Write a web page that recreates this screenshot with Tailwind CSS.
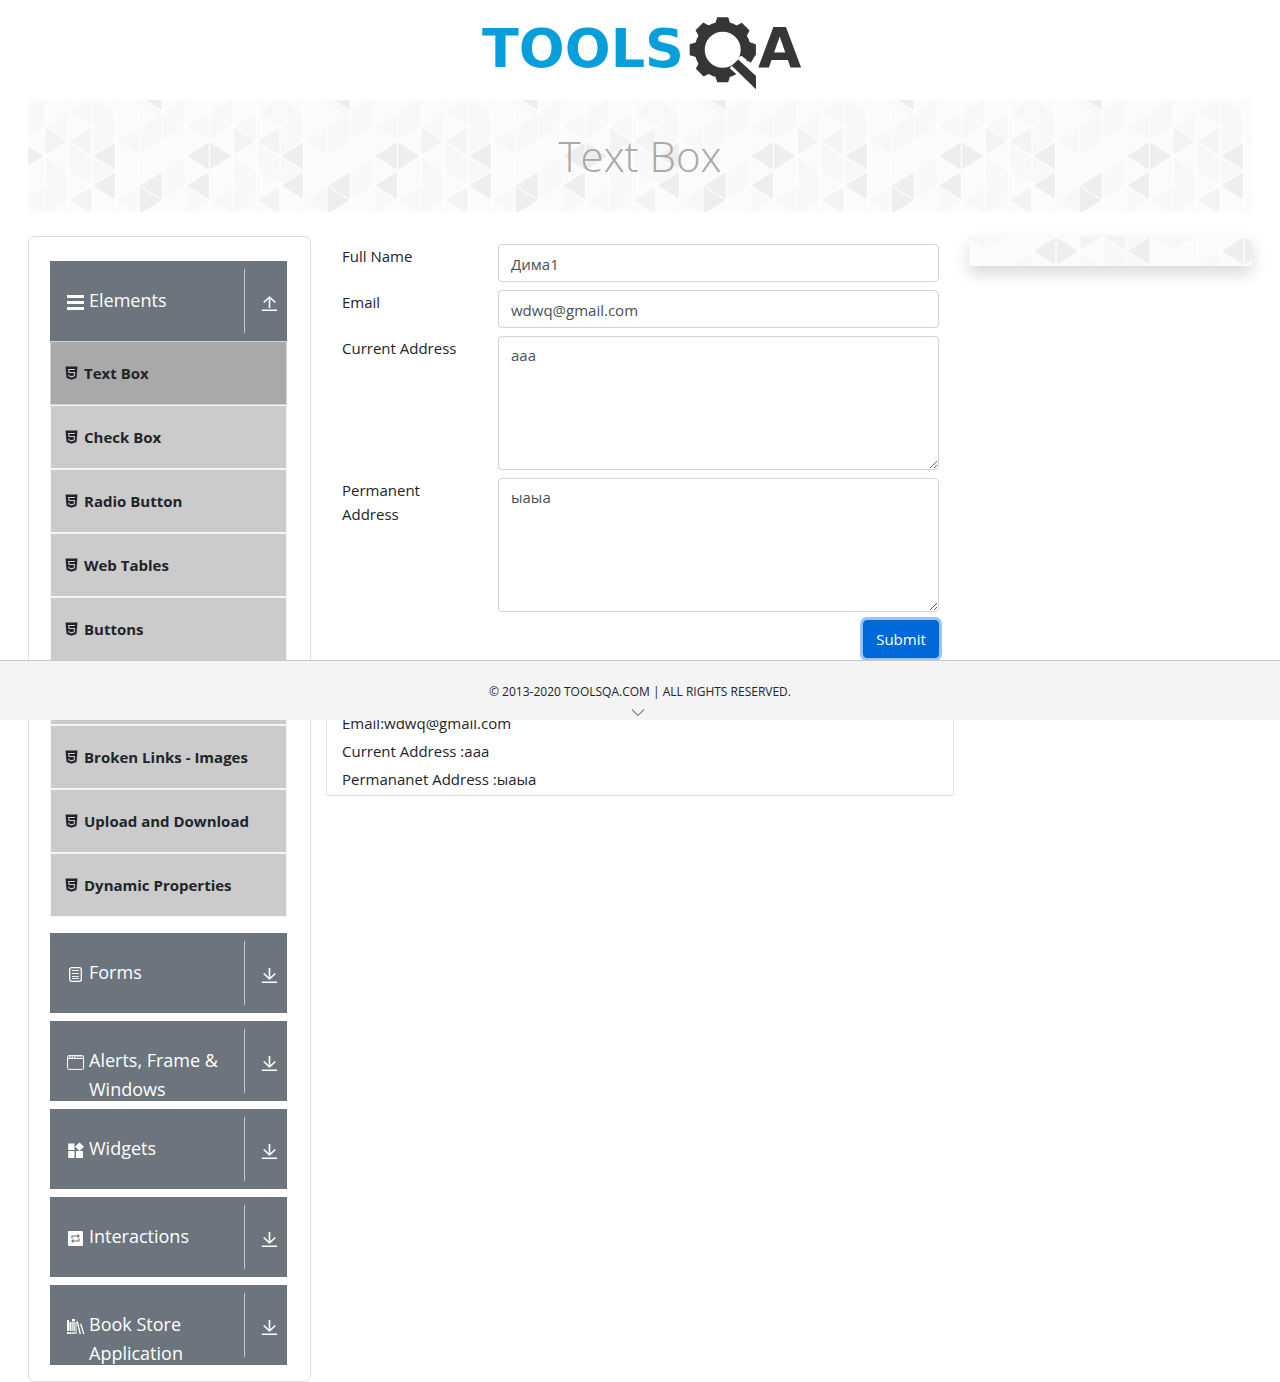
<!DOCTYPE html>
<html lang="en">
<head>
<meta charset="utf-8">
<title>ToolsQA - Text Box</title>
<script src="https://cdn.jsdelivr.net/npm/@tailwindcss/browser@4"></script>
</head>
<body class="relative bg-white font-['Open_Sans','Noto_Sans',sans-serif] text-[15px] leading-6 text-[#212529]">

<!-- shared symbols -->
<svg class="absolute size-0" aria-hidden="true">
  <defs>
    <path id="lt" d="M0 0L23.5 -14.8V14.8Z"/>
    <path id="rt" d="M0 0L-23.5 -14.8V14.8Z"/>
    <pattern id="tri" patternUnits="userSpaceOnUse" x="-31" y="-59.2" width="188" height="118.4">
      <rect width="188" height="118.4" fill="#fbfbfb"/>
      <g fill="#f8f8f8">
        <use href="#lt" x="0" y="29.6"/><use href="#lt" x="0" y="88.8"/><use href="#lt" x="23.5" y="14.8"/><use href="#lt" x="23.5" y="74"/>
        <use href="#rt" x="23.5" y="74"/><use href="#rt" x="23.5" y="103.6"/><use href="#lt" x="47" y="29.6"/><use href="#rt" x="70.5" y="14.8"/>
        <use href="#rt" x="70.5" y="44.4"/><use href="#lt" x="70.5" y="44.4"/><use href="#rt" x="70.5" y="74"/><use href="#lt" x="70.5" y="103.6"/>
        <use href="#lt" x="94" y="29.6"/><use href="#rt" x="117.5" y="44.4"/><use href="#lt" x="117.5" y="14.8"/><use href="#lt" x="117.5" y="74"/>
        <use href="#rt" x="141" y="29.6"/><use href="#rt" x="141" y="88.8"/><use href="#lt" x="141" y="29.6"/><use href="#rt" x="164.5" y="103.6"/>
        <use href="#lt" x="164.5" y="14.8"/><use href="#lt" x="164.5" y="103.6"/><use href="#rt" x="188" y="29.6"/><use href="#rt" x="47" y="59.2"/>
      </g>
      <g fill="#f3f3f3">
        <use href="#rt" x="23.5" y="44.4"/><use href="#lt" x="23.5" y="44.4"/><use href="#lt" x="23.5" y="103.6"/>
      </g>
      <path d="M94 0L117.500 14.800L94 0H117.500V14.800Z" fill="#f8f8f8"/>
      <path d="M94 3h5L117.500 14.800L112 18L94 6Z" fill="#f8f8f8"/>
      <g fill="#eeeeee">
        <use href="#lt" x="47" y="59.2"/><use href="#lt" x="47" y="88.8"/><use href="#lt" x="94" y="88.8"/><use href="#rt" x="117.5" y="103.6"/>
        <path d="M94 0L117.500 0V12L112 12Z"/><use href="#lt" x="141" y="59.2"/><use href="#rt" x="188" y="59.2"/><use href="#lt" x="141" y="88.8"/>
      </g>
      <path fill="none" stroke="#fff" stroke-width="1.300" d="M0 0V119M23.5 0V119M47 0V119M70.5 0V119M94 0V119M117.5 0V119M141 0V119M164.5 0V119M188 0V119
        M0 0L188 118.4M0 29.6L141 118.4M0 59.2L94 118.4M0 88.8L47 118.4M47 0L188 88.8M94 0L188 59.2M141 0L188 29.6
        M188 0L0 118.4M188 29.6L47 118.4M188 59.2L94 118.4M188 88.8L141 118.4M141 0L0 88.8M94 0L0 59.2M47 0L0 29.6"/>
    </pattern>
    <symbol id="html5" viewBox="0 0 13 14"><path fill="currentColor" d="M.5 .5h12l-1 11.500-5 1.800-5-1.800z"/><path fill="none" stroke="#cbcbcb" stroke-width="1.100" d="M10 3.500H3.700l.3 3h5.500l-.3 3.400-2.700.9-2.500-.9-.1-1.200"/></symbol>
    <symbol id="down" viewBox="0 0 16 17"><path fill="none" stroke="currentColor" stroke-width="1.600" d="M7.500 1v11M1.700 6.500l5.800 5.500 5.800-5.500M0 15.200h15"/></symbol>
    <symbol id="up" viewBox="0 0 16 17"><path fill="none" stroke="currentColor" stroke-width="1.600" d="M7.500 13V2M1.700 7.500L7.500 2l5.800 5.500M0 15.200h15"/></symbol>
  </defs>
</svg>

<header class="flex h-[100px] justify-center pt-3 pl-1">
  <a href="#" aria-label="ToolsQA home">
    <svg class="h-20 w-[324px]" viewBox="0 0 324 80">
      <text x="2" y="55" font-size="54" font-weight="700" fill="#069fdb" class="font-['DejaVu_Sans',sans-serif]">TOOLS</text>
      <g transform="translate(242.700 37.700)" fill="#373536">
        <circle r="23" fill="none" stroke="#373536" stroke-width="10"/>
        <g id="teeth"><path d="M-7.500-26L-5.500-32.500h11L7.500-26zM-7.500 26L-5.500 32.500h11L7.500 26zM-26-7.500L-33-5.500v11L-26 7.500zM26-7.500L33-5.500v11L26 7.500z"/></g>
        <use href="#teeth" transform="rotate(45)"/>
        <path fill="#fff" d="M7 18.500L18 6 38 22V46z"/>
        <path d="M17 18L28 5.500 20 5 10 15z" fill="#fff"/>
        <path d="M18 5.500L28 13 33 5V-5L26-8 20-4z"/>
        <path d="M9 16L15.500 9.700 33.300 26.300V39.500z"/>
      </g>
      <text x="278" y="55" font-size="56" font-weight="700" fill="#373536" class="font-['DejaVu_Sans',sans-serif]">A</text>
    </svg>
  </a>
</header>

<main class="px-7">
  <div class="relative flex h-28 items-center justify-center overflow-hidden">
    <svg class="absolute inset-0 size-full" aria-hidden="true"><svg x="50%" y="50%" overflow="visible"><rect x="-2000" y="-200" width="4000" height="400" fill="url(#tri)"/></svg></svg>
    <h1 class="relative text-[42px] leading-[56px] font-light text-[#a9a9a9]">Text Box</h1>
  </div>

  <div class="mt-6 grid grid-cols-[283fr_628fr_283fr] items-start gap-[15px]">

    <nav class="rounded-md border border-[#dedede] pt-6 pr-[23px] pb-4 pl-[21px]">
      <button class="flex h-20 w-full items-start overflow-hidden bg-[#6c757d] pr-[9px] pl-[17px] text-left text-[18px] leading-[29px] text-white">
        <svg class="mt-8 size-[18px] shrink-0" viewBox="0 0 18 18"><path fill="currentColor" d="M0 2h17v3H0zM0 8h17v3H0zM0 14h17v3H0z"/></svg>
        <span class="ml-1 flex-1 pt-[25px]">Elements</span>
        <span class="mt-2 h-16 w-px shrink-0 bg-[#c8c8c8]"></span>
        <svg class="mt-[34px] ml-[17px] h-[17px] w-4 shrink-0"><use href="#up"/></svg>
      </button>
      <ul class="mb-4 font-bold">
        <li><a href="#" class="flex h-16 items-center gap-[6px] border border-[#ced4da] bg-[#a9a9a9] pl-[14px]"><svg class="h-[14px] w-[13px]"><use href="#html5"/></svg>Text Box</a></li>
        <li><a href="#" class="flex h-16 items-center gap-[6px] border border-[#f4f4f4] bg-[#cbcbcb] pl-[14px]"><svg class="h-[14px] w-[13px]"><use href="#html5"/></svg>Check Box</a></li>
        <li><a href="#" class="flex h-16 items-center gap-[6px] border border-[#f4f4f4] bg-[#cbcbcb] pl-[14px]"><svg class="h-[14px] w-[13px]"><use href="#html5"/></svg>Radio Button</a></li>
        <li><a href="#" class="flex h-16 items-center gap-[6px] border border-[#f4f4f4] bg-[#cbcbcb] pl-[14px]"><svg class="h-[14px] w-[13px]"><use href="#html5"/></svg>Web Tables</a></li>
        <li><a href="#" class="flex h-16 items-center gap-[6px] border border-[#f4f4f4] bg-[#cbcbcb] pl-[14px]"><svg class="h-[14px] w-[13px]"><use href="#html5"/></svg>Buttons</a></li>
        <li><a href="#" class="flex h-16 items-center gap-[6px] border border-[#f4f4f4] bg-[#cbcbcb] pl-[14px]"><svg class="h-[14px] w-[13px]"><use href="#html5"/></svg>Links</a></li>
        <li><a href="#" class="flex h-16 items-center gap-[6px] border border-[#f4f4f4] bg-[#cbcbcb] pl-[14px]"><svg class="h-[14px] w-[13px]"><use href="#html5"/></svg>Broken Links - Images</a></li>
        <li><a href="#" class="flex h-16 items-center gap-[6px] border border-[#f4f4f4] bg-[#cbcbcb] pl-[14px]"><svg class="h-[14px] w-[13px]"><use href="#html5"/></svg>Upload and Download</a></li>
        <li><a href="#" class="flex h-16 items-center gap-[6px] border border-[#f4f4f4] bg-[#cbcbcb] pl-[14px]"><svg class="h-[14px] w-[13px]"><use href="#html5"/></svg>Dynamic Properties</a></li>
      </ul>
      <div class="flex flex-col gap-2">
        <button class="flex h-20 w-full items-start overflow-hidden bg-[#6c757d] pr-[9px] pl-[17px] text-left text-[18px] leading-[29px] text-white">
          <svg class="mt-8 size-[18px] shrink-0" viewBox="0 0 18 18" fill="none" stroke="currentColor"><rect x="2.700" y="2.700" width="11.600" height="13.600" rx="2" stroke-width="1.300"/><path d="M5 5.500h7M5 8.500h7M5 11.500h7M5 13.500h7" stroke-width=".9"/></svg>
          <span class="ml-1 flex-1 pt-[25px]">Forms</span>
          <span class="mt-2 h-16 w-px shrink-0 bg-[#c8c8c8]"></span>
          <svg class="mt-[34px] ml-[17px] h-[17px] w-4 shrink-0"><use href="#down"/></svg>
        </button>
        <button class="flex h-20 w-full items-start overflow-hidden bg-[#6c757d] pr-[9px] pl-[17px] text-left text-[18px] leading-[29px] text-white">
          <svg class="mt-8 size-[18px] shrink-0" viewBox="0 0 18 18" fill="none" stroke="currentColor"><rect x=".6" y="2.600" width="16" height="13.800" rx="1" stroke-width="1"/><path d="M1 5.500h15.500" stroke-width="1"/><path d="M2 4h1.500M4.500 4H6M7 4h1.500" stroke-width="1.500"/><path d="M9 3.800h7" stroke-width="1" opacity=".6"/></svg>
          <span class="ml-1 flex-1 pt-[25px]">Alerts, Frame &amp; Windows</span>
          <span class="mt-2 h-16 w-px shrink-0 bg-[#c8c8c8]"></span>
          <svg class="mt-[34px] ml-[17px] h-[17px] w-4 shrink-0"><use href="#down"/></svg>
        </button>
        <button class="flex h-20 w-full items-start overflow-hidden bg-[#6c757d] pr-[9px] pl-[17px] text-left text-[18px] leading-[29px] text-white">
          <svg class="mt-8 size-[18px] shrink-0" viewBox="0 0 18 18" fill="currentColor"><path d="M1.200 2.500h6.300v6.500h-6.300zM1.200 10h6.300V17h-6.300zM9 10H16V17H9zM12.500 1.500l4.500 4.300-4.500 4.300-4.500-4.300z"/></svg>
          <span class="ml-1 flex-1 pt-[25px]">Widgets</span>
          <span class="mt-2 h-16 w-px shrink-0 bg-[#c8c8c8]"></span>
          <svg class="mt-[34px] ml-[17px] h-[17px] w-4 shrink-0"><use href="#down"/></svg>
        </button>
        <button class="flex h-20 w-full items-start overflow-hidden bg-[#6c757d] pr-[9px] pl-[17px] text-left text-[18px] leading-[29px] text-white">
          <svg class="mt-8 size-[18px] shrink-0" viewBox="0 0 18 18"><rect x="1" y="2" width="15" height="15" rx="1" fill="currentColor"/><g fill="none" stroke="#6c757d" stroke-width="1.200"><path d="M5 9.500V7h6M12 9.500V12H6"/></g><path fill="#6c757d" d="M10.500 4.800L13 7l-2.500 2.200zM6.500 9.800L4 12l2.500 2.200z"/></svg>
          <span class="ml-1 flex-1 pt-[25px]">Interactions</span>
          <span class="mt-2 h-16 w-px shrink-0 bg-[#c8c8c8]"></span>
          <svg class="mt-[34px] ml-[17px] h-[17px] w-4 shrink-0"><use href="#down"/></svg>
        </button>
        <button class="flex h-20 w-full items-start overflow-hidden bg-[#6c757d] pr-[9px] pl-[17px] text-left text-[18px] leading-[29px] text-white">
          <svg class="mt-8 size-[18px] shrink-0" viewBox="0 0 18 18" fill="currentColor"><path d="M0 3h2v11H0zM0 15h2v2H0zM2.500 5h2v9h-2zM2.500 15h2v2h-2zM5 2h3v2H5zM8.500 5h1v12h-1zM9.500 4.500l1.300-.4L14 17h-1.500zM13 7l1.200-.4L17.500 17h-1.300z"/><path d="M5 4.500h3V14H5zM5 15h3v2H5z" opacity=".7"/></svg>
          <span class="ml-1 flex-1 pt-[25px]">Book Store Application</span>
          <span class="mt-2 h-16 w-px shrink-0 bg-[#c8c8c8]"></span>
          <svg class="mt-[34px] ml-[17px] h-[17px] w-4 shrink-0"><use href="#down"/></svg>
        </button>
      </div>
    </nav>

    <section>
      <form class="grid grid-cols-[157fr_441fr] gap-y-2 px-[15px] pt-2">
        <label for="name" class="pl-px">Full Name</label>
        <input id="name" type="text" value="Дима1" class="h-[38px] w-full rounded border border-[#ced4da] px-3 pt-0.5 text-[#495057]">
        <label for="email" class="pl-px">Email</label>
        <input id="email" type="email" value="wdwq@gmail.com" class="h-[38px] w-full rounded border border-[#ced4da] px-3 pt-0.5 text-[#495057]">
        <label for="current" class="pl-px">Current Address</label>
        <textarea id="current" class="block h-[134px] w-full rounded border border-[#ced4da] px-3 py-1.5 text-[#495057]">aaa</textarea>
        <label for="permanent" class="pr-8 pl-px">Permanent Address</label>
        <textarea id="permanent" class="block h-[134px] w-full rounded border border-[#ced4da] px-3 py-1.5 text-[#495057]">ыаыа</textarea>
        <button type="button" class="col-start-2 h-[38px] w-[76px] justify-self-end rounded border border-[#0062cc] bg-[#0069d9] text-white ring-3 ring-[#94c6fd]">Submit</button>
      </form>
      <div class="mt-4 border border-[#dee2e6] px-[15px] pt-2">
        <p class="mb-1">Name:Дима1</p>
        <p class="mb-1">Email:wdwq@gmail.com</p>
        <p class="mb-1">Current Address :aaa</p>
        <p class="mb-1">Permananet Address :ыаыа</p>
      </div>
    </section>

    <aside class="relative h-[30px] shadow-[0_8px_16px_rgba(0,0,0,0.15)]">
      <svg class="absolute inset-0 size-full overflow-hidden" aria-hidden="true"><svg x="50%" y="50%" overflow="visible"><rect x="-2000" y="-200" width="4000" height="400" fill="url(#tri)"/></svg></svg>
    </aside>
  </div>
</main>

<!-- bar pinned over the content -->
<footer class="absolute inset-x-0 top-[660px] flex h-[60px] flex-col items-center border-t border-[#c8c8c8] bg-[#f4f4f4] pt-[22px] text-[12px] leading-[18px]">
  <span>© 2013-2020 TOOLSQA.COM | ALL RIGHTS RESERVED.</span>
  <svg class="mt-[7px] mr-1 h-4 w-3.5 shrink-0" viewBox="0 0 14 16" fill="none" stroke="#8a8a8a" stroke-width="1.200"><path d="M1 1.500l6 6 6-6"/></svg>
</footer>
</body>
</html>
